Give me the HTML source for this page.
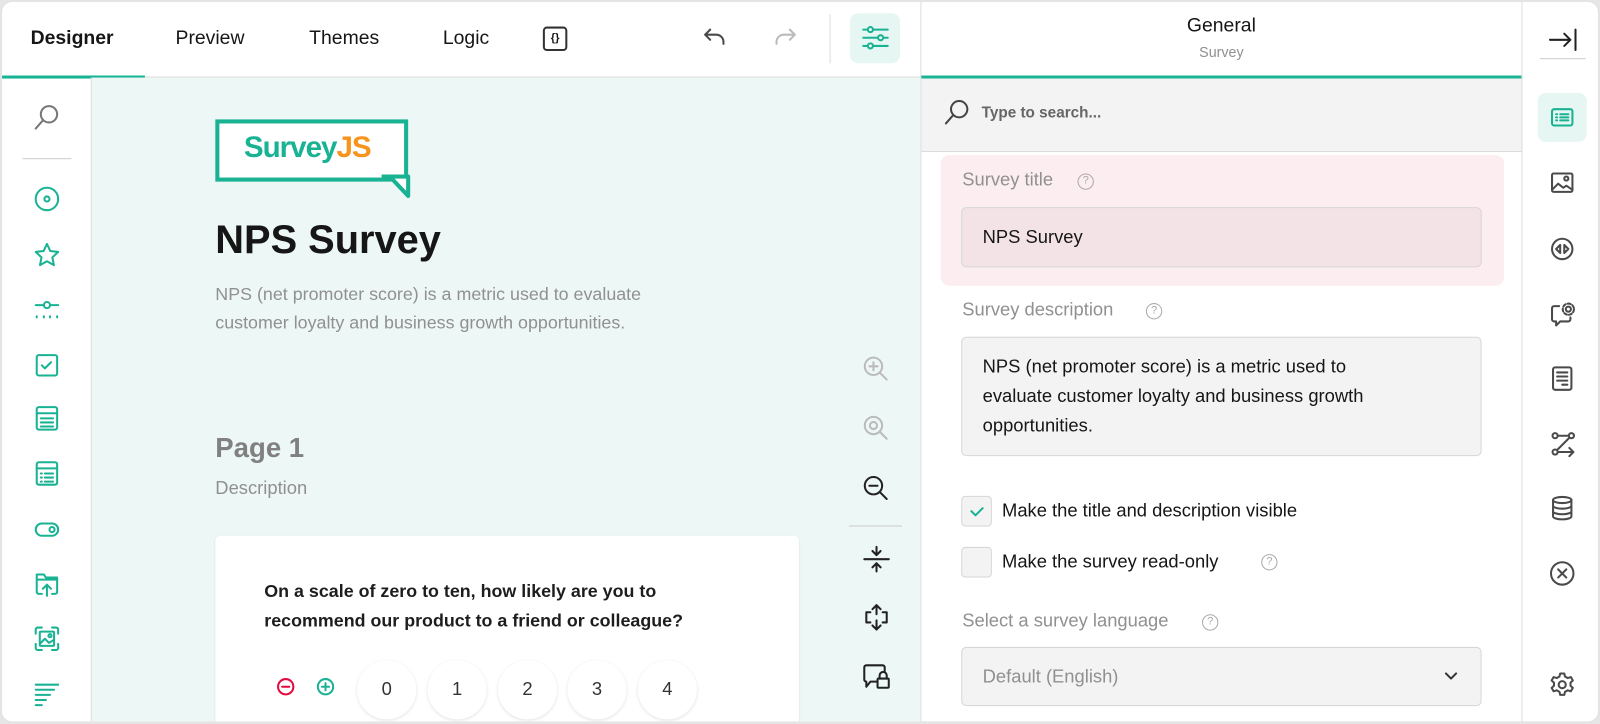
<!DOCTYPE html>
<html><head><meta charset="utf-8"><style>
*{box-sizing:border-box;margin:0;padding:0}
body{width:1600px;height:724px;overflow:hidden;background:#e6e6e6;font-family:"Liberation Sans",sans-serif;color:#161616}
.frame{position:absolute;left:0;top:0;width:1568px;height:709px;background:#fff;border:2px solid #e4e4e4;border-radius:12px;overflow:hidden;transform:scale(1.0204);transform-origin:0 0}
.abs{position:absolute}
.tab{position:absolute;top:25px;font-size:19px;color:#161616}
svg{position:absolute;fill:none;stroke-width:2;stroke-linecap:round;stroke-linejoin:round}
.g{stroke:#19b394}.d{stroke:#4a4a4a}.l{stroke:#bbb}
.lbl{position:absolute;font-size:18px;color:#909090}
.q{position:absolute;width:16px;height:16px;border:1.5px solid #aaa;border-radius:50%;font-size:11px;color:#aaa;text-align:center;line-height:13px}
.inp{position:absolute;left:940px;width:510px;background:#f3f3f3;border:1px solid #d6d6d6;border-radius:5px;font-size:18px;color:#161616}
.num{position:absolute;top:645px;width:58px;height:58px;border-radius:50%;background:#fff;box-shadow:0 1px 3px rgba(0,0,0,.12);text-align:center;line-height:56px;font-size:18px;color:#333}
</style></head><body><div class="frame">
<div class="abs" style="left:0;top:73px;width:1490px;height:1px;background:#dcdcdc"></div>
<div class="abs" style="left:0;top:72px;width:140px;height:3px;background:#19b394"></div>
<div class="abs" style="left:900px;top:72px;width:590px;height:3px;background:#19b394"></div>
<div class="tab" style="left:28px;font-weight:bold">Designer</div>
<div class="tab" style="left:170px">Preview</div>
<div class="tab" style="left:301px">Themes</div>
<div class="tab" style="left:432px">Logic</div>
<div class="abs" style="left:530px;top:24px;width:24px;height:24px;border:2px solid #333;border-radius:4px;font-size:11px;text-align:center;line-height:19px;font-weight:bold">{}</div>
<svg class="d" style="left:686px;top:23px" width="26" height="24"><path d="M8 4L3 9l5 5M3 9h11a7 7 0 0 1 7 7v2"/></svg>
<svg class="l" style="left:754px;top:23px" width="26" height="24"><path d="M18 4l5 5-5 5M23 9H12a7 7 0 0 0-7 7v2"/></svg>
<div class="abs" style="left:811px;top:12px;width:1px;height:48px;background:#ddd"></div>
<div class="abs" style="left:831px;top:11px;width:49px;height:49px;border-radius:8px;background:#e6f6f2"></div>
<svg class="g" style="left:842px;top:21px" width="28" height="28"><path d="M2 6h24M2 14h24M2 22h24"/><circle cx="9" cy="6" r="2.5" fill="#e6f6f2"/><circle cx="19" cy="14" r="2.5" fill="#e6f6f2"/><circle cx="9" cy="22" r="2.5" fill="#e6f6f2"/></svg>
<div class="abs" style="left:900px;top:0;width:1px;height:724px;background:#dcdcdc"></div>
<div class="abs" style="left:900px;top:13px;width:590px;text-align:center;font-size:19px">General</div>
<div class="abs" style="left:900px;top:41px;width:590px;text-align:center;font-size:14px;color:#909090">Survey</div>
<div class="abs" style="left:87px;top:74px;width:1px;height:650px;background:#dcdcdc"></div>
<svg class="d" style="left:30px;top:99px;stroke:#777" width="28" height="28"><circle cx="16" cy="11" r="8"/><path d="M10 17l-7 8"/></svg>
<div class="abs" style="left:20px;top:153px;width:48px;height:1px;background:#ccc"></div>
<svg class="g" style="left:30px;top:179px" width="28" height="28"><circle cx="14" cy="14" r="11"/><circle cx="14" cy="14" r="2.5"/></svg>
<svg class="g" style="left:30px;top:234px" width="28" height="28"><path d="M14 3l3.3 7 7.7.9-5.7 5.3 1.5 7.6L14 20l-6.8 3.8 1.5-7.6L3 10.9l7.7-.9z"/></svg>
<svg class="g" style="left:30px;top:288px" width="28" height="28"><path d="M3 9h8M17 9h8M4 20v1M11 20v1M17 20v1M24 20v1"/><circle cx="14" cy="9" r="3"/></svg>
<svg class="g" style="left:30px;top:342px" width="28" height="28"><rect x="4" y="4" width="20" height="20" rx="2"/><path d="M9 14l3 3 6-6"/></svg>
<svg class="g" style="left:30px;top:394px" width="28" height="28"><rect x="4" y="3" width="20" height="22" rx="2"/><path d="M4 9h20M8 14h12M8 18h12M8 22h12"/></svg>
<svg class="g" style="left:30px;top:448px" width="28" height="28"><rect x="4" y="3" width="20" height="22" rx="2"/><path d="M4 9h20M8 14h1M12 14h8M8 18h1M12 18h8M8 22h1M12 22h8"/></svg>
<svg class="g" style="left:30px;top:503px" width="28" height="28"><rect x="3" y="8" width="22" height="12" rx="6"/><circle cx="19" cy="14" r="2.5"/></svg>
<svg class="g" style="left:30px;top:556px" width="28" height="28"><path d="M9 24H6a2 2 0 0 1-2-2V5h7l2 3h11v14a2 2 0 0 1-2 2h-3M4 10h20M14 26V15M10 19l4-4 4 4"/></svg>
<svg class="g" style="left:30px;top:610px" width="28" height="28"><path d="M3 9V5a2 2 0 0 1 2-2h4M19 3h4a2 2 0 0 1 2 2v4M25 19v4a2 2 0 0 1-2 2h-4M9 25H5a2 2 0 0 1-2-2v-4"/><rect x="7" y="7" width="14" height="14" rx="1"/><path d="M7 19l5-5 4 4 5-3"/><circle cx="17" cy="11" r="1.5"/></svg>
<svg class="g" style="left:30px;top:664px" width="28" height="28"><path d="M3 5h22M3 10h18M3 15h14M3 20h10M3 25h6"/></svg>
<div class="abs" style="left:88px;top:74px;width:812px;height:650px;background:#edf7f5"></div>
<div class="abs" style="left:209px;top:115px;width:189px;height:61px;border:4px solid #19b394;background:#fff"></div>
<svg style="left:370px;top:169px;stroke:#19b394;stroke-width:4;stroke-linecap:butt;fill:#fff" width="32" height="24"><path d="M2 2h26v19L10 2"/></svg>
<div class="abs" style="left:237px;top:127px;font-size:29px;font-weight:bold;color:#19b394;letter-spacing:-1px">Survey<span style="color:#f7941d">JS</span></div>
<div class="abs" style="left:209px;top:212px;font-size:39px;font-weight:bold">NPS Survey</div>
<div class="abs" style="left:209px;top:272px;width:480px;font-size:17.5px;line-height:28px;color:#909090">NPS (net promoter score) is a metric used to evaluate customer loyalty and business growth opportunities.</div>
<div class="abs" style="left:209px;top:422px;font-size:27px;font-weight:bold;color:#808080">Page 1</div>
<div class="abs" style="left:209px;top:466px;font-size:18px;color:#909090">Description</div>
<div class="abs" style="left:209px;top:523px;width:572px;height:220px;background:#fff;border-radius:5px;box-shadow:0 1px 2px rgba(0,0,0,.1)"></div>
<div class="abs" style="left:257px;top:563px;width:470px;font-size:17.5px;line-height:29px;font-weight:bold;color:#1d1d1d">On a scale of zero to ten, how likely are you to recommend our product to a friend or colleague?</div>
<svg style="left:268px;top:661px;stroke:#e50a3e" width="20" height="20"><circle cx="10" cy="10" r="7.5"/><path d="M6.5 10h7"/></svg>
<svg style="left:307px;top:661px;stroke:#19b394" width="20" height="20"><circle cx="10" cy="10" r="7.5"/><path d="M6.5 10h7M10 6.5v7"/></svg>
<div class="num" style="left:348px">0</div><div class="num" style="left:417px">1</div><div class="num" style="left:486px">2</div><div class="num" style="left:554px">3</div><div class="num" style="left:623px">4</div>
<svg class="l" style="left:842px;top:345px" width="30" height="30"><circle cx="12" cy="12" r="8.5"/><path d="M18 18l7 7M12 8v8M8 12h8"/></svg>
<svg class="l" style="left:842px;top:403px" width="30" height="30"><circle cx="12" cy="12" r="8.5"/><circle cx="12" cy="12" r="3.5"/><path d="M18 18l7 7"/></svg>
<svg class="d" style="left:842px;top:462px;stroke:#222" width="30" height="30"><circle cx="12" cy="12" r="8.5"/><path d="M18 18l7 7M8 12h8"/></svg>
<div class="abs" style="left:830px;top:513px;width:52px;height:1px;background:#ccc"></div>
<svg class="d" style="left:842px;top:531px;stroke:#222" width="30" height="30"><path d="M3 15h24M15 3v8M11 7l4 4 4-4M15 27v-8M11 23l4-4 4 4"/></svg>
<svg class="d" style="left:842px;top:588px;stroke:#222" width="30" height="30"><path d="M15 3v9M11 7l4-4 4 4M15 27v-9M11 23l4 4 4-4M9 10H5v10h4M21 10h4v10h-4"/></svg>
<svg class="d" style="left:842px;top:646px;stroke:#222" width="30" height="30"><path d="M15 20H9l-4 5v-5H5a2 2 0 0 1-2-2V6a2 2 0 0 1 2-2h16a2 2 0 0 1 2 2v4"/><rect x="16" y="17" width="11" height="9" rx="1"/><path d="M18 17v-3a3.5 3.5 0 0 1 7 0v3"/></svg>
<div class="abs" style="left:901px;top:75px;width:589px;height:72px;background:#f3f3f3;border-bottom:1px solid #dcdcdc"></div>
<svg class="d" style="left:922px;top:94px;stroke:#444" width="28" height="28"><circle cx="16" cy="11" r="8"/><path d="M10 17l-7 8"/></svg>
<div class="abs" style="left:960px;top:100px;font-size:15px;font-weight:bold;color:#666">Type to search...</div>
<div class="abs" style="left:920px;top:150px;width:552px;height:128px;background:#fcedf0;border-radius:8px"></div>
<div class="lbl" style="left:941px;top:164px">Survey title</div><div class="q" style="left:1054px;top:168px">?</div>
<div class="inp" style="top:201px;height:59px;line-height:56px;padding-left:20px;background:#f3e3e6">NPS Survey</div>
<div class="lbl" style="left:941px;top:291px">Survey description</div><div class="q" style="left:1121px;top:295px">?</div>
<div class="inp" style="top:328px;height:117px;padding:14px 70px 16px 20px;line-height:29px">NPS (net promoter score) is a metric used to evaluate customer loyalty and business growth opportunities.</div>
<div class="abs" style="left:940px;top:484px;width:30px;height:30px;border:1px solid #d6d6d6;border-radius:4px;background:#f3f3f3"></div>
<svg class="g" style="left:945px;top:489px" width="20" height="20"><path d="M5 10l4 4 7-7"/></svg>
<div class="abs" style="left:980px;top:488px;font-size:18px">Make the title and description visible</div>
<div class="abs" style="left:940px;top:534px;width:30px;height:30px;border:1px solid #d6d6d6;border-radius:4px;background:#f3f3f3"></div>
<div class="abs" style="left:980px;top:538px;font-size:18px">Make the survey read-only</div><div class="q" style="left:1234px;top:541px">?</div>
<div class="lbl" style="left:941px;top:596px">Select a survey language</div><div class="q" style="left:1176px;top:600px">?</div>
<div class="inp" style="top:632px;height:58px;line-height:56px;padding-left:20px;color:#909090">Default (English)</div>
<svg class="d" style="left:1412px;top:652px;stroke:#333" width="16" height="16"><path d="M3 6l5 5 5-5"/></svg>
<div class="abs" style="left:1489px;top:0;width:1px;height:724px;background:#dcdcdc"></div>
<svg class="d" style="left:1515px;top:23px;stroke:#222" width="30" height="28"><path d="M2 14h20M16 8l6 6-6 6M27 4v20"/></svg>
<div class="abs" style="left:1507px;top:55px;width:45px;height:1px;background:#ccc"></div>
<div class="abs" style="left:1505px;top:89px;width:48px;height:48px;border-radius:8px;background:#e6f6f2"></div>
<svg class="g" style="left:1517px;top:101px" width="24" height="24"><rect x="2" y="4" width="20" height="16" rx="2"/><path d="M6 9h1M10 9h8M6 12h1M10 12h8M6 15h1M10 15h8"/></svg>
<svg class="d" style="left:1517px;top:165px" width="24" height="24"><rect x="2" y="3" width="20" height="18" rx="1.5"/><path d="M2 19l6-6 5 4 3-2 6 4"/><circle cx="16" cy="8" r="2"/></svg>
<svg class="d" style="left:1517px;top:230px" width="24" height="24"><circle cx="12" cy="12" r="10"/><path d="M10 8l-4 4 4 4zM14 8l4 4-4 4z"/></svg>
<svg class="d" style="left:1517px;top:293px" width="26" height="26"><path d="M9 5H4a2 2 0 0 0-2 2v11a2 2 0 0 0 2 2h2v4l4-4h8a2 2 0 0 0 2-2v-2"/><circle cx="18" cy="8" r="2.5"/><circle cx="18" cy="8" r="5.5" stroke-dasharray="3 2"/></svg>
<svg class="d" style="left:1517px;top:356px" width="24" height="26"><rect x="3" y="2" width="18" height="22" rx="2"/><path d="M7 7h10M7 11h10M7 15h10M12 19h5"/></svg>
<svg class="d" style="left:1517px;top:420px" width="26" height="26"><circle cx="5" cy="5" r="2.5"/><circle cx="5" cy="21" r="2.5"/><circle cx="21" cy="5" r="2.5"/><path d="M8 5h10M19 7L7 19M8 21h15M19 17l4 4-4 4"/></svg>
<svg class="d" style="left:1517px;top:483px" width="24" height="26"><ellipse cx="12" cy="5" rx="9" ry="3"/><path d="M3 5v16c0 1.7 4 3 9 3s9-1.3 9-3V5M3 10.5c0 1.7 4 3 9 3s9-1.3 9-3M3 16c0 1.7 4 3 9 3s9-1.3 9-3"/></svg>
<svg class="d" style="left:1516px;top:547px" width="26" height="26"><circle cx="13" cy="13" r="11"/><path d="M9 9l8 8M17 9l-8 8"/></svg>
<svg class="d" style="left:1516px;top:656px" width="26" height="26"><circle cx="13" cy="13" r="3.5"/><path d="M11 2h4l.7 3 2.7 1.5 3-1 2 3.4-2.3 2.1v3l2.3 2.1-2 3.4-3-1-2.7 1.5-.7 3h-4l-.7-3-2.7-1.5-3 1-2-3.4 2.3-2.1v-3L2.6 8.9l2-3.4 3 1L10.3 5z"/></svg>
</div></body></html>
